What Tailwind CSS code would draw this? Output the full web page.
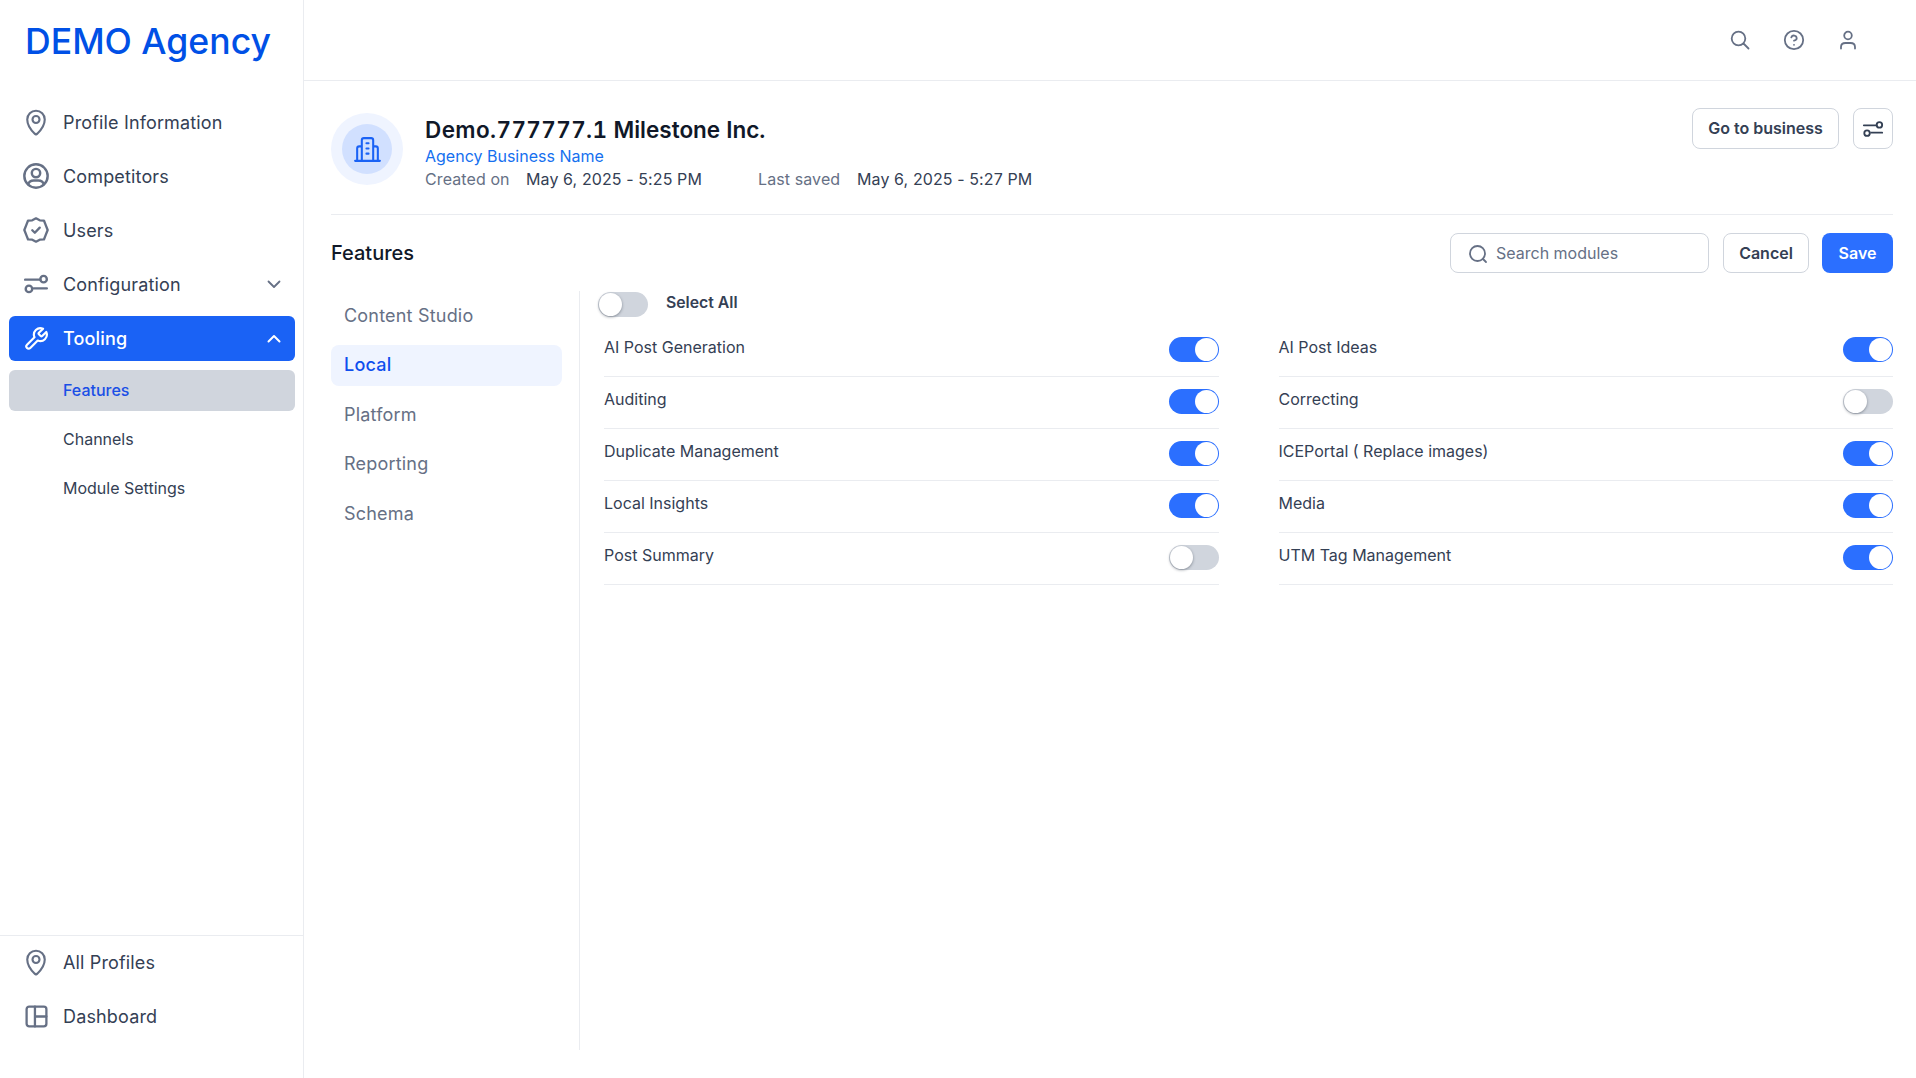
<!DOCTYPE html>
<html lang="en">
<head>
<meta charset="utf-8">
<title>Features</title>
<script src="https://cdn.jsdelivr.net/npm/@tailwindcss/browser@4"></script>
</head>
<body class="font-['Inter',sans-serif] bg-white text-[#344054]">
<div class="flex w-[1916px] h-[1078px] overflow-hidden">
  <!-- Sidebar -->
  <aside class="w-[304px] shrink-0 border-r border-[#eaecf0] flex flex-col">
    <div class="h-[84px] pl-[25px] flex items-center text-[35.6px] font-[450] text-[#0050e6] leading-none">DEMO Agency</div>
    <nav class="flex flex-col pl-[9px] pr-[8px] pt-[11px] text-[18px] tracking-[0.15px]">
      <a class="h-[54px] flex items-center"><span class="w-[54px] flex justify-center"><svg class="w-[30px] h-[30px]" viewBox="0 0 24 24" fill="none" stroke="#667085" stroke-width="1.700" stroke-linecap="round" stroke-linejoin="round"><path d="M12 22l-1-.6C7.800 18.300 5 14.600 5 10a7 7 0 0 1 14 0c0 4.600-2.800 8.300-6 11.400z"/><circle cx="12" cy="10" r="2.800"/></svg></span>Profile Information</a>
      <a class="h-[54px] flex items-center"><span class="w-[54px] flex justify-center"><svg class="w-[28px] h-[28px]" viewBox="0 0 24 24" fill="none" stroke="#667085" stroke-width="2.100" stroke-linecap="round" stroke-linejoin="round"><circle cx="12" cy="12" r="10"/><circle cx="12" cy="9.500" r="3.600"/><path d="M5.200 19.200c.7-2.300 2.600-3.400 4.800-3.400h4c2.200 0 4.100 1.100 4.800 3.400"/></svg></span>Competitors</a>
      <a class="h-[54px] flex items-center"><span class="w-[54px] flex justify-center"><svg class="w-[28px] h-[28px]" viewBox="0 0 24 24" fill="none" stroke="#667085" stroke-width="2" stroke-linecap="round" stroke-linejoin="round"><path d="M12 2l3.200 1.700 3.600.2 1.300 3.300L22 12l-1.900 4.800-1.300 3.300-3.600.2L12 22l-3.200-1.700-3.600-.2-1.300-3.300L2 12l1.900-4.800 1.300-3.300 3.600-.2z"/><path d="M8.800 12.200l2.200 2.200 4.200-4.400"/></svg></span>Users</a>
      <a class="h-[54px] flex items-center"><span class="w-[54px] flex justify-center"><svg class="w-[26px] h-[26px]" viewBox="0 0 24 24" fill="none" stroke="#667085" stroke-width="2.200" stroke-linecap="round" stroke-linejoin="round"><path d="M2 8h14M10 16h12"/><circle cx="19" cy="7.500" r="3"/><circle cx="5.500" cy="16.500" r="3"/></svg></span><span class="flex-1">Configuration</span><svg class="w-[20px] h-[20px] mr-[11px]" viewBox="0 0 20 20" fill="none" stroke="#667085" stroke-width="1.800" stroke-linecap="round" stroke-linejoin="round"><path d="M4.500 7.500L10 13l5.500-5.500"/></svg></a>
      <a class="h-[45px] mt-[5px] flex items-center bg-[#1a62f5] rounded-[6px] text-white font-medium"><span class="w-[54px] flex justify-center"><svg class="w-[26px] h-[26px]" viewBox="0 0 24 24" fill="none" stroke="#fff" stroke-width="2" stroke-linecap="round" stroke-linejoin="round"><path d="M14.700 6.300a1 1 0 0 0 0 1.400l1.600 1.600a1 1 0 0 0 1.400 0l3.800-3.800a6 6 0 0 1-7.900 7.900l-6.900 6.900a2.120 2.120 0 0 1-3-3l6.900-6.900a6 6 0 0 1 7.900-7.900z"/></svg></span><span class="flex-1">Tooling</span><svg class="w-[20px] h-[20px] mr-[11px]" viewBox="0 0 20 20" fill="none" stroke="#fff" stroke-width="2" stroke-linecap="round" stroke-linejoin="round"><path d="M4.500 12.500L10 7l5.500 5.500"/></svg></a>
      <a class="h-[41px] mt-[9px] pb-[2px] pl-[54px] flex items-center bg-[#d0d5dd] rounded-[6px] text-[16px] tracking-normal font-medium text-[#1a4fe6]">Features</a>
      <a class="h-[49px] mt-[3px] pl-[54px] flex items-center text-[16px] tracking-normal">Channels</a>
      <a class="h-[49px] pl-[54px] flex items-center text-[16px] tracking-normal">Module Settings</a>
    </nav>
    <div class="mt-auto h-[143px] border-t border-[#eaecf0] px-[9px] text-[18px] tracking-[0.15px]">
      <a class="h-[54px] -mt-[1px] flex items-center"><span class="w-[54px] flex justify-center"><svg class="w-[30px] h-[30px]" viewBox="0 0 24 24" fill="none" stroke="#667085" stroke-width="1.700" stroke-linecap="round" stroke-linejoin="round"><path d="M12 22l-1-.6C7.800 18.300 5 14.600 5 10a7 7 0 0 1 14 0c0 4.600-2.800 8.300-6 11.400z"/><circle cx="12" cy="10" r="2.800"/></svg></span>All Profiles</a>
      <a class="h-[54px] flex items-center"><span class="w-[54px] flex justify-center"><svg class="w-[25px] h-[25px]" viewBox="0 0 24 24" fill="none" stroke="#667085" stroke-width="2.200" stroke-linecap="round" stroke-linejoin="round"><rect x="2.500" y="2.500" width="19" height="19" rx="2.500"/><path d="M10.500 2.500v19M10.500 12h11"/></svg></span>Dashboard</a>
    </div>
  </aside>

  <div class="flex-1 min-w-0 flex flex-col">
    <!-- Top bar -->
    <header class="h-[81px] shrink-0 border-b border-[#eaecf0] flex items-center justify-end gap-[30px] pr-[56px]">
      <svg class="w-[24px] h-[24px]" viewBox="0 0 24 24" fill="none" stroke="#667085" stroke-width="1.800" stroke-linecap="round" stroke-linejoin="round"><circle cx="10.500" cy="10.500" r="6.800"/><path d="M15.500 15.500l5 5"/></svg>
      <svg class="w-[24px] h-[24px]" viewBox="0 0 24 24" fill="none" stroke="#667085" stroke-width="1.800" stroke-linecap="round" stroke-linejoin="round"><circle cx="12" cy="12" r="9.200"/><path d="M9.300 9.300a2.800 2.800 0 0 1 5.400.9c0 1.800-2.700 2.500-2.700 2.500M12 16.800h.01"/></svg>
      <svg class="w-[24px] h-[24px]" viewBox="0 0 24 24" fill="none" stroke="#667085" stroke-width="1.800" stroke-linecap="round" stroke-linejoin="round"><circle cx="12" cy="7.500" r="3.800"/><path d="M5 20.500V19c0-2.600 2-4 4.500-4h5c2.500 0 4.500 1.400 4.500 4v1.500"/></svg>
    </header>

    <main class="flex-1 min-h-0 pl-[27px] pr-[23px] flex flex-col">
      <!-- Business head -->
      <section class="h-[134px] shrink-0 border-b border-[#eaecf0] flex items-start pt-[32px]">
        <div class="w-[72px] h-[72px] rounded-full bg-[#eff4ff] flex items-center justify-center">
          <div class="w-[50px] h-[50px] rounded-full bg-[#d1e0ff] flex items-center justify-center">
            <svg class="w-[31px] h-[31px]" viewBox="0 0 30 30" fill="none" stroke="#1a62f5" stroke-width="2" stroke-linecap="round" stroke-linejoin="round"><path d="M3 26h24M9.500 26V6a2 2 0 0 1 2-2h7a2 2 0 0 1 2 2v20M9.500 12H7a2 2 0 0 0-2 2v12M20.500 12H23a2 2 0 0 1 2 2v12M14 9h2M14 14h2M14 19h2"/></svg>
          </div>
        </div>
        <div class="ml-[22px] mt-[1px]">
          <div class="text-[22.5px] leading-[32px] font-semibold tabular-nums text-[#101828]"><span class="tracking-[0.38px]">Demo.777777.1</span> Milestone Inc.</div>
          <div class="text-[16px] leading-[21px] text-[#1570ef]">Agency Business Name</div>
          <div class="text-[16px] leading-[24px] flex text-[#667085] tracking-[0.1px]"><span class="w-[101px]">Created on</span><span class="w-[232px] text-[#344054]">May 6, 2025 - 5:25 PM</span><span class="w-[99px]">Last saved</span><span class="text-[#344054]">May 6, 2025 - 5:27 PM</span></div>
        </div>
        <div class="ml-auto -mt-[5px] flex gap-[14px]">
          <button class="h-[41px] w-[147px] pb-[2px] border border-[#d0d5dd] rounded-[8px] text-[16px] font-semibold">Go to business</button>
          <button class="h-[41px] w-[40px] border border-[#d0d5dd] rounded-[8px] flex items-center justify-center"><svg class="w-[22px] h-[22px]" viewBox="0 0 24 24" fill="none" stroke="#344054" stroke-width="2" stroke-linecap="round" stroke-linejoin="round"><path d="M2 8h14M10 16h12"/><circle cx="19" cy="7.500" r="3"/><circle cx="5.500" cy="16.500" r="3"/></svg></button>
        </div>
      </section>

      <!-- Features head -->
      <section class="h-[76px] shrink-0 flex items-center">
        <h2 class="text-[20px] font-medium text-[#101828]">Features</h2>
        <div class="ml-auto flex items-center">
          <div class="w-[259px] h-[40px] pb-[1px] border border-[#d0d5dd] rounded-[8px] flex items-center pl-[17px] text-[16px] text-[#667085]"><svg class="w-[20px] h-[20px] mt-[2px] mr-[8px]" viewBox="0 0 20 20" fill="none" stroke="#667085" stroke-width="1.800" stroke-linecap="round" stroke-linejoin="round"><circle cx="9.500" cy="9.500" r="7.500"/><path d="M15 15l3 3"/></svg>Search modules</div>
          <button class="ml-[14px] w-[86px] h-[40px] pb-[1px] border border-[#d0d5dd] rounded-[8px] text-[16px] font-semibold">Cancel</button>
          <button class="ml-[13px] w-[71px] h-[40px] pb-[1px] bg-[#2b6fff] rounded-[8px] text-[16px] font-semibold text-white">Save</button>
        </div>
      </section>

      <!-- Body -->
      <section class="flex-1 min-h-0 flex pb-[28px]">
        <div class="w-[231px] shrink-0 text-[18px] tracking-[0.2px] text-[#667085] flex flex-col">
          <div class="h-[49px] mb-[5px] pl-[13px] flex items-center">Content Studio</div>
          <div class="h-[41px] pb-[2px] pl-[13px] flex items-center bg-[#eff4ff] text-[#0f4fee] rounded-[8px] font-medium">Local</div>
          <div class="h-[49.5px] mt-[3.5px] pl-[13px] flex items-center">Platform</div>
          <div class="h-[49.5px] pl-[13px] flex items-center">Reporting</div>
          <div class="h-[49.5px] pl-[13px] flex items-center">Schema</div>
        </div>
        <div class="ml-[17px] flex-1 border-l border-[#eaecf0] pl-[18px]">
          <div class="h-[34px] pt-[1px] flex items-start">
            <span class="relative w-[50px] h-[25px] rounded-full bg-[#d0d5dd] block"><span class="absolute left-[1px] top-[1px] w-[23px] h-[23px] rounded-full bg-white shadow-[0_1px_3px_rgba(16,24,40,0.4)]"></span></span>
            <span class="ml-[18px] -mt-[1px] text-[15.8px] leading-[24px] font-semibold">Select All</span>
          </div>
          <div class="pl-[6px] grid grid-cols-2 gap-x-[60px] text-[16px] leading-[24px]">
            <div class="flex flex-col">
              <div class="h-[52px] border-b border-[#eaecf0] flex items-start justify-between pt-[10px]"><span>AI Post Generation</span><span class="relative mt-[2px] w-[50px] h-[25px] rounded-full bg-[#2b6fff] block"><span class="absolute right-[1px] top-[1px] w-[23px] h-[23px] rounded-full bg-white"></span></span></div>
              <div class="h-[52px] border-b border-[#eaecf0] flex items-start justify-between pt-[10px]"><span>Auditing</span><span class="relative mt-[2px] w-[50px] h-[25px] rounded-full bg-[#2b6fff] block"><span class="absolute right-[1px] top-[1px] w-[23px] h-[23px] rounded-full bg-white"></span></span></div>
              <div class="h-[52px] border-b border-[#eaecf0] flex items-start justify-between pt-[10px]"><span>Duplicate Management</span><span class="relative mt-[2px] w-[50px] h-[25px] rounded-full bg-[#2b6fff] block"><span class="absolute right-[1px] top-[1px] w-[23px] h-[23px] rounded-full bg-white"></span></span></div>
              <div class="h-[52px] border-b border-[#eaecf0] flex items-start justify-between pt-[10px]"><span>Local Insights</span><span class="relative mt-[2px] w-[50px] h-[25px] rounded-full bg-[#2b6fff] block"><span class="absolute right-[1px] top-[1px] w-[23px] h-[23px] rounded-full bg-white"></span></span></div>
              <div class="h-[52px] border-b border-[#eaecf0] flex items-start justify-between pt-[10px]"><span>Post Summary</span><span class="relative mt-[2px] w-[50px] h-[25px] rounded-full bg-[#d0d5dd] block"><span class="absolute left-[1px] top-[1px] w-[23px] h-[23px] rounded-full bg-white shadow-[0_1px_3px_rgba(16,24,40,0.4)]"></span></span></div>
            </div>
            <div class="flex flex-col">
              <div class="h-[52px] border-b border-[#eaecf0] flex items-start justify-between pt-[10px]"><span>AI Post Ideas</span><span class="relative mt-[2px] w-[50px] h-[25px] rounded-full bg-[#2b6fff] block"><span class="absolute right-[1px] top-[1px] w-[23px] h-[23px] rounded-full bg-white"></span></span></div>
              <div class="h-[52px] border-b border-[#eaecf0] flex items-start justify-between pt-[10px]"><span>Correcting</span><span class="relative mt-[2px] w-[50px] h-[25px] rounded-full bg-[#d0d5dd] block"><span class="absolute left-[1px] top-[1px] w-[23px] h-[23px] rounded-full bg-white shadow-[0_1px_3px_rgba(16,24,40,0.4)]"></span></span></div>
              <div class="h-[52px] border-b border-[#eaecf0] flex items-start justify-between pt-[10px]"><span>ICEPortal ( Replace images)</span><span class="relative mt-[2px] w-[50px] h-[25px] rounded-full bg-[#2b6fff] block"><span class="absolute right-[1px] top-[1px] w-[23px] h-[23px] rounded-full bg-white"></span></span></div>
              <div class="h-[52px] border-b border-[#eaecf0] flex items-start justify-between pt-[10px]"><span>Media</span><span class="relative mt-[2px] w-[50px] h-[25px] rounded-full bg-[#2b6fff] block"><span class="absolute right-[1px] top-[1px] w-[23px] h-[23px] rounded-full bg-white"></span></span></div>
              <div class="h-[52px] border-b border-[#eaecf0] flex items-start justify-between pt-[10px]"><span>UTM Tag Management</span><span class="relative mt-[2px] w-[50px] h-[25px] rounded-full bg-[#2b6fff] block"><span class="absolute right-[1px] top-[1px] w-[23px] h-[23px] rounded-full bg-white"></span></span></div>
            </div>
          </div>
        </div>
      </section>
    </main>
  </div>
</div>
</body>
</html>
